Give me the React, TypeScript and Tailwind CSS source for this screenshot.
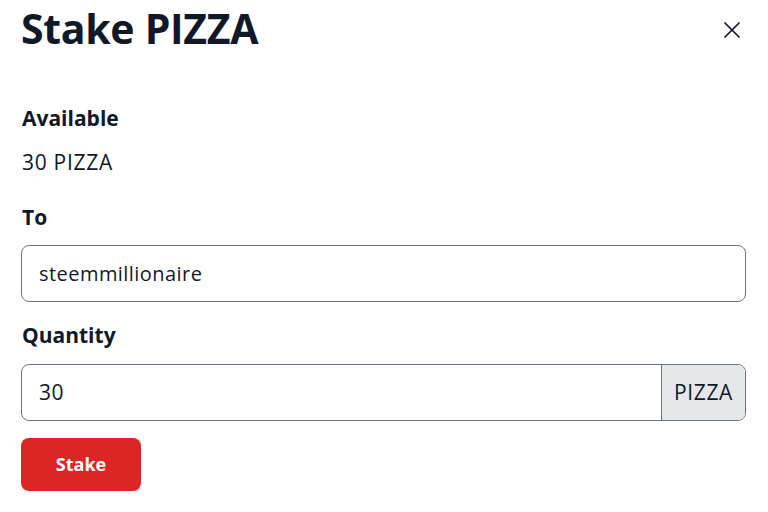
import React from "react";

export default function App() {
  return (
    <div className="w-[768px] h-[512px] bg-white text-[#111827] overflow-hidden" style={{ fontFamily: "'Open Sans', 'Noto Sans', sans-serif" }}>
      <div className="flex items-center justify-between pl-[21px] pr-[28px] pt-[4px]">
        <h1 className="text-[41px] leading-[48px] font-bold text-[#111827] tracking-[-0.3px]">Stake PIZZA</h1>
        <button className="flex items-center justify-center text-[#111827] mt-[4px]">
          <svg width="16" height="16" viewBox="0 0 16 16" fill="none" stroke="currentColor" strokeWidth="1.7" strokeLinecap="round">
            <path d="M1 1L15 15M15 1L1 15" />
          </svg>
        </button>
      </div>
      <div className="flex flex-col pl-[21px] pr-[22px]">
        <div className="mt-[52px] pl-[1px] text-[21px] leading-[28px] font-bold">Available</div>
        <div className="mt-[16px] pl-[1px] text-[21px] leading-[28px] tracking-[0.7px]">30 PIZZA</div>
        <div className="mt-[27px] pl-[1px] text-[21px] leading-[28px] font-bold">To</div>
        <div className="mt-[14px] h-[57px] border border-[#6b7280] rounded-lg flex items-center px-[17px] text-[20px] tracking-[0.45px]">
          steemmillionaire
        </div>
        <div className="mt-[19px] pl-[1px] text-[21px] leading-[28px] font-bold">Quantity</div>
        <div className="mt-[15px] h-[57px] border border-[#6b7280] rounded-lg flex overflow-hidden text-[21px] tracking-[0.6px]">
          <div className="flex-1 flex items-center px-[17px]">30</div>
          <div className="w-[84px] border-l border-[#6b7280] bg-[#e5e7eb] flex items-center justify-center">PIZZA</div>
        </div>
        <div className="mt-[17px]">
          <button className="w-[120px] h-[53px] rounded-lg bg-[#dc2626] text-white text-[18px] font-bold flex items-center justify-center">Stake</button>
        </div>
      </div>
    </div>
  );
}
